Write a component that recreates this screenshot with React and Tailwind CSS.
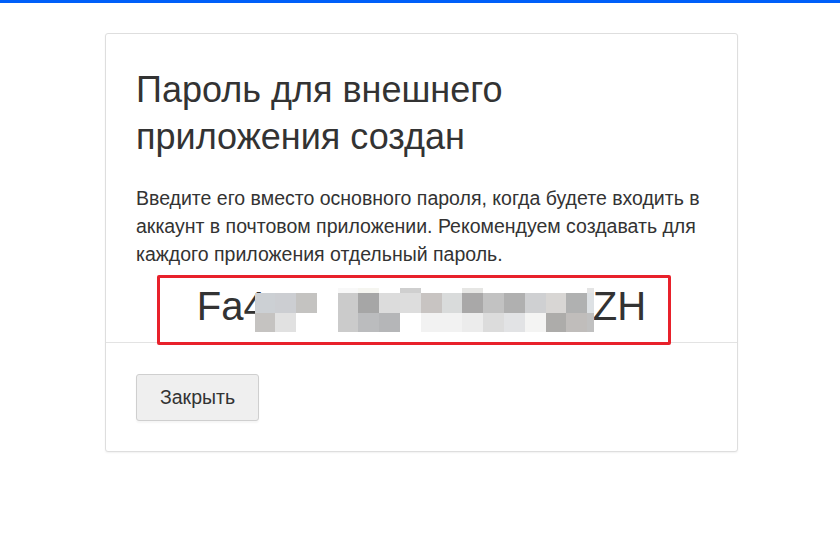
const TOP_ROW = [
  "bg-transparent",
  "bg-transparent",
  "bg-transparent",
  "bg-transparent",
  "bg-[#f8f8f8]",
  "bg-[#f5f5f0]",
  "bg-transparent",
  "bg-[#cfcfcf]",
  "bg-transparent",
  "bg-transparent",
  "bg-[#e6e6e4]",
  "bg-transparent",
  "bg-transparent",
  "bg-transparent",
  "bg-transparent",
  "bg-transparent",
];

const ROW_ONE = [
  "bg-[#ccd0d4]",
  "bg-[#ccced2]",
  "bg-[#c4c3c1]",
  "bg-white",
  "bg-[#cbcbcb]",
  "bg-[#a6a6a6]",
  "bg-[#dcdcdc]",
  "bg-[#dddddd]",
  "bg-[#c8c4c2]",
  "bg-[#d9dbdb]",
  "bg-[#a9a8a8]",
  "bg-[#c2c2c2]",
  "bg-[#b0b0b0]",
  "bg-[#cfd0d2]",
  "bg-[#d8d6d4]",
  "bg-[#b0b1b1]",
];

const ROW_TWO = [
  "bg-[#c5c3c1]",
  "bg-[#e1e1e1]",
  "bg-white",
  "bg-white",
  "bg-[#cbcbcb]",
  "bg-[#bbbcbe]",
  "bg-[#b5b6b8]",
  "bg-white",
  "bg-[#f2f2f2]",
  "bg-[#f2f2f2]",
  "bg-[#ececec]",
  "bg-[#dcdcdc]",
  "bg-[#e2e3e5]",
  "bg-[#f4f4f3]",
  "bg-[#adacaa]",
  "bg-[#c0bdbb]",
];

function Mosaic() {
  return (
    <div className="absolute left-[148.5px] top-[254px] flex flex-col">
      {/* pixelated part of the password */}
      <div className="flex h-[4.7px]">
        {TOP_ROW.map((c, i) => (
          <div key={i} className={`w-[20.8px] ${c}`} />
        ))}
        <div className="w-[6.5px] bg-[#e4e4e4]" />
      </div>
      <div className="flex h-[20px]">
        {ROW_ONE.map((c, i) => (
          <div key={i} className={`w-[20.8px] ${c}`} />
        ))}
        <div className="w-[6.5px] bg-[#dde1e4]" />
      </div>
      <div className="flex h-[19.3px]">
        {ROW_TWO.map((c, i) => (
          <div key={i} className={`w-[20.8px] ${c}`} />
        ))}
        <div className="w-[6.5px] bg-[#c0c0c0]" />
      </div>
    </div>
  );
}

export default function App() {
  return (
    <div className="min-h-screen bg-white font-['Liberation_Sans',Arial,sans-serif] text-[#333]">
      <div className="h-[3px] bg-[#005ff9]" />

      <div className="pt-[30px]">
        <div className="relative ml-[105px] w-[633px] rounded-[3px] border border-[#dedede] bg-white shadow-[0_1px_2px_rgba(0,0,0,0.06)]">
          {/* Body */}
          <div className="px-[30px] pt-[32px] pb-[12px]">
            <h1 className="max-w-[420px] text-[36px] leading-[47px] font-normal">
              Пароль для внешнего приложения создан
            </h1>
            <p className="mt-[24px] text-[19.5px] leading-[28px]">
              Введите его вместо основного пароля, когда будете входить в
              аккаунт в почтовом приложении. Рекомендуем создавать для
              каждого приложения отдельный пароль.
            </p>
            <div className="mt-[14px] flex h-[48px] items-center justify-center text-[40px] leading-[48px]">
              <span>Fa4</span>
              <span className="inline-block w-[327px]" />
              <span>ZH</span>
            </div>
          </div>

          {/* Footer */}
          <div className="border-t border-[#e3e3e3] px-[30px] pt-[31px] pb-[30px]">
            <button className="h-[47px] rounded-[3px] border border-[#cfcfcf] bg-[#efefef] px-[23px] text-[19.5px] text-[#333] shadow-[0_2px_2px_rgba(0,0,0,0.04)]">
              Закрыть
            </button>
          </div>

          <Mosaic />

          {/* red highlight */}
          <div className="absolute left-[51px] top-[241px] h-[70px] w-[514px] rounded-[2px] border-[3px] border-[#e8212b]" />
        </div>
      </div>
    </div>
  );
}
